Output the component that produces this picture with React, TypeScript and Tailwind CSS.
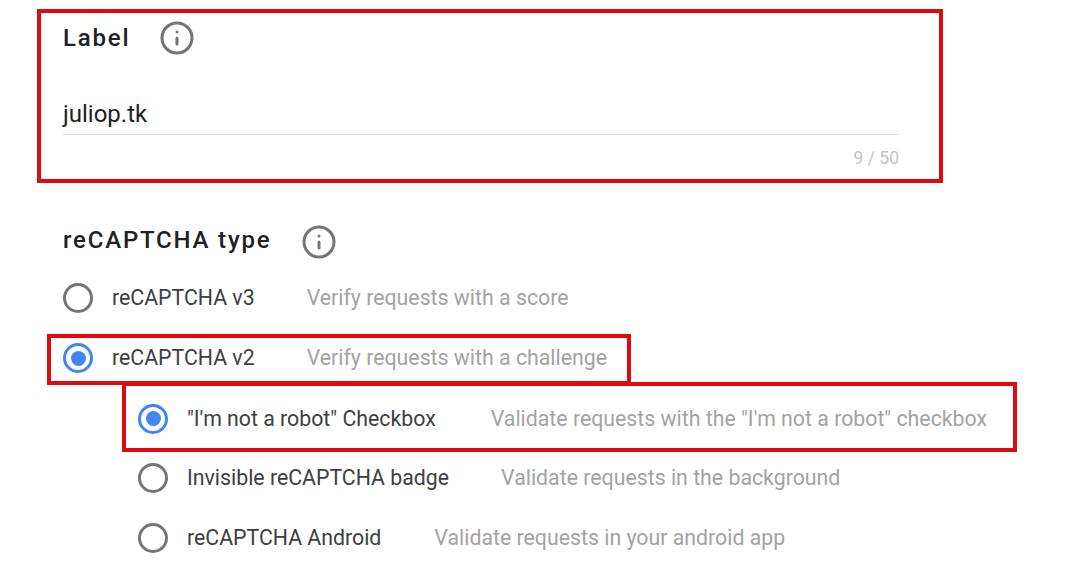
import { Info } from 'lucide-react';

const font = { label: "font-['Roboto',sans-serif]" };

function Radio({ checked = false }: { checked?: boolean }) {
  if (checked) {
    return (
      <span className="flex h-[30px] w-[30px] shrink-0 items-center justify-center rounded-full border-[3px] border-[#4285f4]">
        <span className="h-[15px] w-[15px] rounded-full bg-[#4285f4]" />
      </span>
    );
  }
  return <span className="h-[30px] w-[30px] shrink-0 rounded-full border-[3px] border-[#757575]" />;
}

function Option({ name, hint, checked, hintClass }: { name: string; hint: string; checked?: boolean; hintClass: string }) {
  return (
    <div className="flex items-center text-[21.3px] leading-[30px]">
      <Radio checked={checked} />
      <span className="ml-[19px] whitespace-nowrap text-[#3c4043]">{name}</span>
      <span className={`${hintClass} whitespace-nowrap text-[#a3a3a3]`}>{hint}</span>
    </div>
  );
}

export default function App() {
  return (
    <div className={`${font.label} h-[578px] w-[1079px] overflow-hidden bg-white pt-[9px]`}>
      {/* Label box */}
      <div className="ml-[37px] h-[174px] w-[906px] border-[4px] border-[#dd0a0f] pl-[22px] pr-[40px]">
        <div className="flex h-[50px] items-center">
          <span className="text-[24px] font-medium tracking-[1.8px] text-[#202124]">Label</span>
          <Info className="ml-[29px] h-[36px] w-[36px] text-[#757575]" strokeWidth={2} />
        </div>
        <div className="mt-[34px] h-[38px] border-b border-[#e0e0e0] text-[24px] leading-[34px] text-[#202124]">juliop.tk</div>
        <div className="mt-[11px] text-right text-[17.5px] leading-[24px] text-[#c4c4c4]">9 / 50</div>
      </div>

      {/* reCAPTCHA type */}
      <div className="ml-[63px] mt-[36px] flex h-[46px] items-center">
        <span className="mb-[4px] text-[24px] font-medium tracking-[1.8px] text-[#202124]">reCAPTCHA type</span>
        <Info className="ml-[30px] h-[36px] w-[36px] text-[#757575]" strokeWidth={2} />
      </div>

      <div className="ml-[63px] mt-[18px]">
        <Option name="reCAPTCHA v3" hint="Verify requests with a score" hintClass="ml-[52px]" />
      </div>

      <div className="ml-[47px] mt-[21px] flex h-[51px] w-[584px] items-center border-[4px] border-[#dd0a0f] pb-[3px] pl-[12px]">
        <Option name="reCAPTCHA v2" hint="Verify requests with a challenge" checked hintClass="ml-[52px]" />
      </div>

      <div className="relative ml-[122px] mt-[-3px] flex h-[70px] w-[895px] items-center border-[4px] border-[#dd0a0f] pl-[12px] pt-[3px]">
        <Option name={'"I\'m not a robot" Checkbox'} hint={'Validate requests with the "I\'m not a robot" checkbox'} checked hintClass="ml-[55px]" />
      </div>

      <div className="ml-[138px] mt-[11px]">
        <Option name="Invisible reCAPTCHA badge" hint="Validate requests in the background" hintClass="ml-[52px]" />
      </div>
      <div className="ml-[138px] mt-[30px]">
        <Option name="reCAPTCHA Android" hint="Validate requests in your android app" hintClass="ml-[53px]" />
      </div>
    </div>
  );
}
